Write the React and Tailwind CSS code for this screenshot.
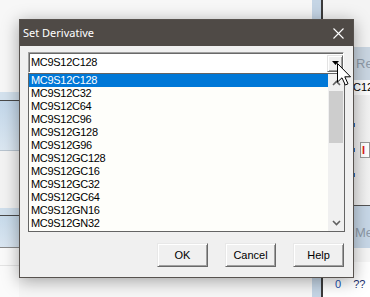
import React from "react";

const derivatives = [
  "MC9S12C128",
  "MC9S12C32",
  "MC9S12C64",
  "MC9S12C96",
  "MC9S12G128",
  "MC9S12G96",
  "MC9S12GC128",
  "MC9S12GC16",
  "MC9S12GC32",
  "MC9S12GC64",
  "MC9S12GN16",
  "MC9S12GN32",
];

const sysFont = { fontFamily: '"Liberation Sans", Arial, sans-serif' };

function Chevron({ up }) {
  return (
    <svg width="9" height="6" viewBox="0 0 9 6">
      <path
        d={up ? "M1 5 L4.5 1.5 L8 5" : "M1 1 L4.5 4.5 L8 1"}
        fill="none"
        stroke="#606060"
        strokeWidth="1.6"
      />
    </svg>
  );
}

function ClassicButton({ children }) {
  return (
    <button
      className="w-[51px] h-[24px] bg-[#f0f0f0] border border-t-[#e8e8e8] border-l-[#e8e8e8] border-b-[#696969] border-r-[#696969] shadow-[inset_1px_1px_0_#ffffff,inset_-1px_-1px_0_#a0a0a0] text-[11px] text-black flex items-center justify-center"
      style={sysFont}
    >
      {children}
    </button>
  );
}

function Background() {
  return (
    <div className="absolute inset-0 flex">
      {/* left strip of the app behind */}
      <div className="w-[19px] flex flex-col">
        <div className="h-[92px] bg-[#f7f7f7]" />
        <div className="h-[8px] bg-[#d4e2ee]" />
        <div className="h-[1px] bg-[#4a4a4a]" />
        <div className="h-[49px] bg-gradient-to-b from-[#c3d7ea] to-[#dbe7f1]" />
        <div className="h-[1px] bg-[#b8c4cf]" />
        <div className="h-[57px] bg-[#f3f3f3]" />
        <div className="h-[7px] bg-[#d0dfec]" />
        <div className="h-[1px] bg-[#4a4a4a]" />
        <div className="h-[31px] bg-gradient-to-b from-[#c8dbeb] to-[#dae6f1]" />
        <div className="h-[1px] bg-[#8a8a8a]" />
        <div className="h-[17px] bg-[#fafafa]" />
        <div className="h-[1px] bg-[#e4e4e4]" />
        <div className="flex-1 bg-[#fbfbfb]" />
      </div>
      <div className="flex-1 bg-[#f7f7f7]" />
      {/* splitter */}
      <div className="w-[9px] bg-[#c5d5e5]" />
      <div className="w-[2px] bg-[#3c3c3c]" />
      {/* right panel */}
      <div className="w-[47px] flex flex-col bg-[#f4f4f4] overflow-hidden">
        <div className="h-[47px]" />
        <div className="h-[33px] bg-[#cad6e2] flex items-center pl-[33px] text-[13px] text-[#8e9aa8] whitespace-nowrap" style={sysFont}>
          Reg
        </div>
        <div className="h-[15px] bg-[#fdfdfd] flex items-center pl-[30px] text-[11px] text-black whitespace-nowrap" style={sysFont}>
          C12
        </div>
        <div className="h-[110px] bg-gradient-to-r from-[#e8e8e8] to-[#f2f2f2] flex flex-col pl-[30px] pt-[28px] gap-[15px]">
          <div className="flex items-center">
            <div className="w-[2px] h-[4px] bg-[#2a6fc4]" />
          </div>
          <div className="flex items-center gap-[5px]">
            <div className="w-[2px] h-[4px] bg-[#2a6fc4]" />
            <div className="w-[10px] h-[16px] border border-[#9a9a9a] bg-white text-[11px] font-bold text-[#e02020] leading-none pl-[1px] pt-[2px]" style={sysFont}>
              I
            </div>
          </div>
          <div className="flex items-center">
            <div className="w-[2px] h-[4px] bg-[#2a6fc4]" />
          </div>
        </div>
        <div className="h-[1px] bg-[#555555]" />
        <div className="h-[42px] bg-[#c7d7e7] flex items-end pb-[6px] pl-[32px] text-[13px] text-[#8e9aa8] whitespace-nowrap" style={sysFont}>
          Me
        </div>
        <div className="h-[14px] bg-[#f6f6f6]" />
        <div className="flex-1 bg-white flex items-start pt-[14px] pl-[12px] gap-[12px] text-[11px]" style={sysFont}>
          <span className="text-[#2050b0]">0</span>
          <span className="text-[#203070]">??</span>
        </div>
      </div>
    </div>
  );
}

function Dialog() {
  return (
    <div className="absolute left-[19px] top-[19px] w-[335px] h-[259px] border border-[#57524e] bg-[#f0f0f0] flex flex-col shadow-[0_3px_16px_rgba(0,0,0,0.35)]">
      {/* title bar */}
      <div className="h-[26px] bg-[#4f4a46] flex items-center justify-between pl-[3px] pr-[9px]">
        <span className="text-[11px] text-white" style={{ fontFamily: '"Noto Sans", "Open Sans", sans-serif' }}>
          Set Derivative
        </span>
        <svg width="11" height="11" viewBox="0 0 11 11">
          <path d="M0.5 0.5 L10.5 10.5 M10.5 0.5 L0.5 10.5" stroke="#ffffff" strokeWidth="1.1" />
        </svg>
      </div>

      <div className="flex-1 flex flex-col pl-[8px] pt-[6px]">
        {/* combobox */}
        <div className="w-[316px] h-[21px] border border-t-[#a0a0a0] border-l-[#a0a0a0] border-b-white border-r-white shadow-[inset_1px_1px_0_#696969] bg-white flex items-center justify-between pl-[2px]">
          <span className="text-[11px] tracking-[-0.3px] text-black" style={sysFont}>
            MC9S12C128
          </span>
          <div className="w-[16px] h-[17px] mt-[1px] bg-[#f0f0f0] border border-t-[#e3e3e3] border-l-[#e3e3e3] border-b-[#696969] border-r-[#696969] shadow-[inset_1px_1px_0_#ffffff,inset_-1px_-1px_0_#a0a0a0] flex items-center justify-center">
            <svg width="7" height="4" viewBox="0 0 7 4">
              <path d="M0 0 L7 0 L3.5 4 Z" fill="#000000" />
            </svg>
          </div>
        </div>

        {/* list */}
        <div className="w-[317px] h-[159px] border border-[#646464] bg-[#fefefa] flex">
          <div className="w-[299px] flex flex-col">
            {derivatives.map((name, i) => (
              <div
                key={name}
                className={`h-[13px] flex items-center pl-[2px] text-[11px] tracking-[-0.3px] ${
                  i === 0 ? "bg-[#0078d7] text-white" : "text-black"
                }`}
                style={sysFont}
              >
                {name}
              </div>
            ))}
          </div>
          <div className="w-[16px] bg-[#f0f0f0] flex flex-col">
            <div className="h-[17px] flex items-center justify-center">
              <Chevron up />
            </div>
            <div className="h-[52px] mx-[1px] bg-[#cdcdcd]" />
            <div className="flex-1" />
            <div className="h-[17px] flex items-center justify-center">
              <Chevron />
            </div>
          </div>
        </div>

        {/* buttons */}
        <div className="mt-[11px] flex justify-end gap-[17px] pr-[9px]">
          <ClassicButton>OK</ClassicButton>
          <ClassicButton>Cancel</ClassicButton>
          <ClassicButton>Help</ClassicButton>
        </div>
      </div>
    </div>
  );
}

export default function App() {
  return (
    <div className="relative w-[370px] h-[297px] overflow-hidden">
      <Background />
      <Dialog />
      {/* mouse pointer */}
      <svg className="absolute left-[337px] top-[63px]" width="15" height="24" viewBox="0 0 15 24">
        <path
          d="M0.5 0.5 L0.5 19 L5 14.8 L8.3 22 L11 20.8 L7.8 13.8 L13.5 13.8 Z"
          fill="#ffffff"
          stroke="#000000"
          strokeWidth="1"
          strokeLinejoin="miter"
        />
      </svg>
    </div>
  );
}
